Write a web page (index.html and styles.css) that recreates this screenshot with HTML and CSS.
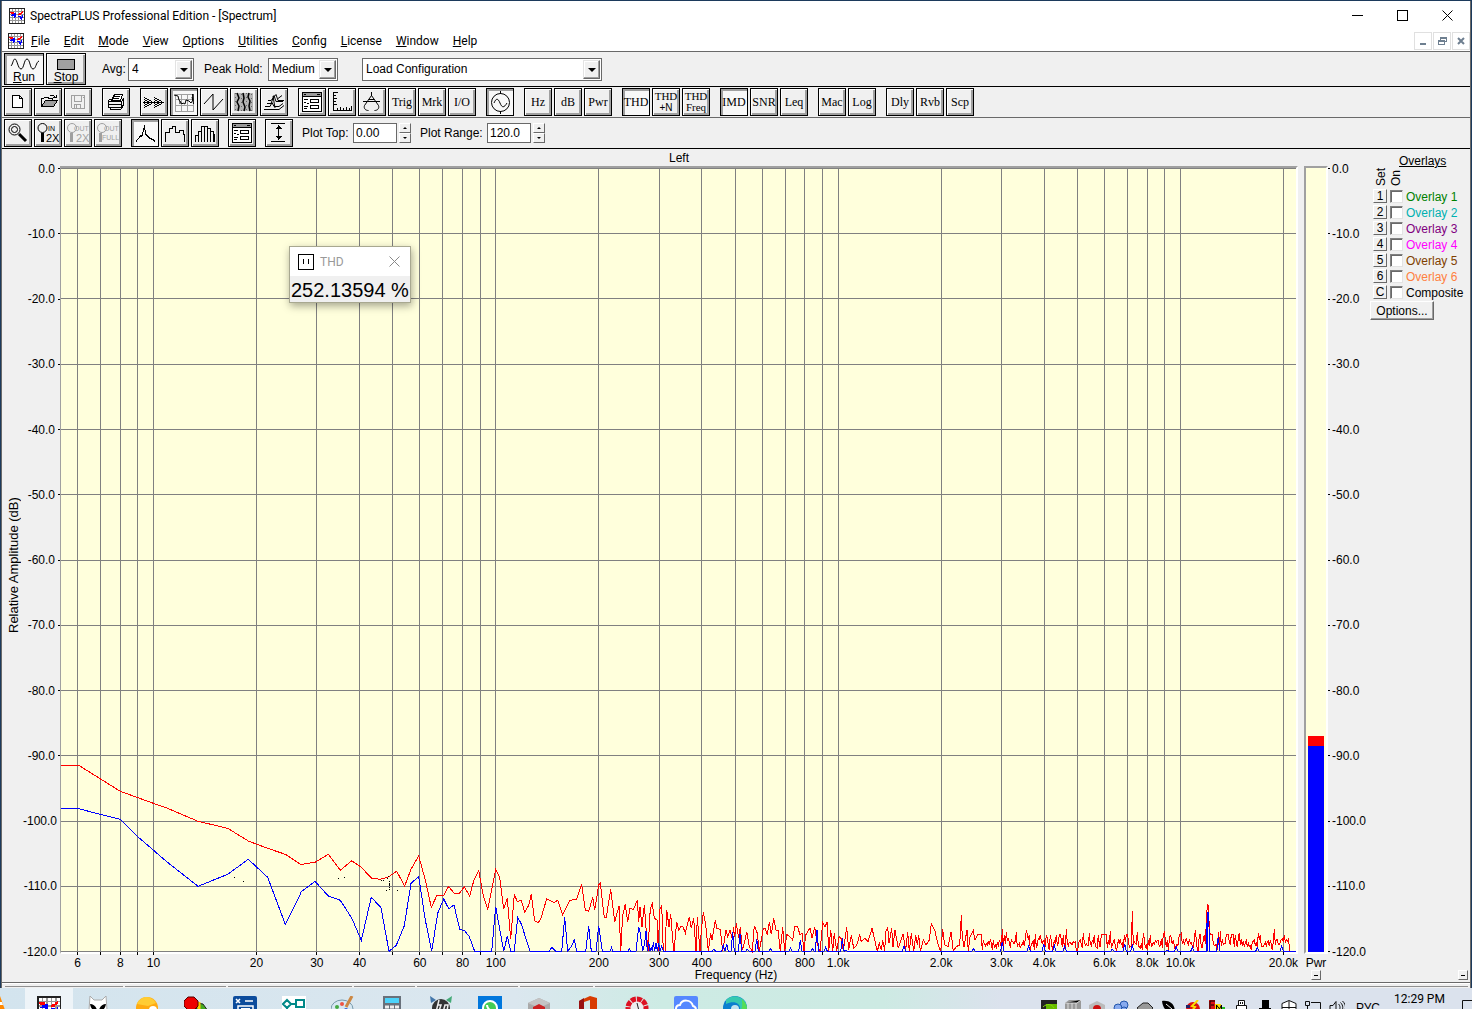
FILE: index.html
```html
<!DOCTYPE html>
<html lang="en">
<head>
<meta charset="utf-8">
<title>SpectraPLUS Professional Edition - [Spectrum]</title>
<link rel="stylesheet" href="styles.css">
</head>
<body>
<svg class="defs" aria-hidden="true">
  <symbol id="app" viewBox="0 0 16 16">
    <path fill="#fff" stroke="#222" d="M.5.5h15v15H.5z"/>
    <path stroke="#999" fill="none" d="M3.5 1v14M6.5 1v14M9.5 1v14M12.5 1v14M1 3.500h14M1 6.500h14M1 9.500h14M1 12.500h14"/>
    <path stroke="#f00" fill="none" d="M1 4.500h4M2 5.500h3M9 6.500h3M10 5.500h2M12.500 4v2M13.500 3v2"/>
    <path stroke="#00f" fill="none" d="M2 7.500h4M3 6.500h2M5.500 5v5M6.500 5v4M9 8.500h3M11.500 8v3M12.500 9v3M13.500 7v3"/>
  </symbol>
  <symbol id="dialog" viewBox="1 1 26 26">
    <path fill="#fff" stroke="#000" d="M4.500 4.500h19v19h-19z"/>
    <path stroke="#999" stroke-width="3" d="M5 6.500h18"/>
    <path stroke="#000" d="M5 8.500h18M6 6.500h2M19 6.500h3"/>
    <path fill="none" stroke="#000" d="M12.500 11.500h8v3h-8zM12.500 17.500h8v3h-8zM6 11.500h4M6 14.500h2M9 15.500h2M6 18.500h4M6 20.500h3"/>
  </symbol>
</svg>

<div class="window">
  <header class="titlebar">
    <svg class="app-icon"><use href="#app"/></svg>
    <h1>SpectraPLUS Professional Edition - [Spectrum]</h1>
    <div class="win-controls">
      <button aria-label="Minimize"><svg viewBox="0 0 11 11"><path d="M0 5.500h11"/></svg></button>
      <button aria-label="Maximize"><svg viewBox="0 0 11 11"><path d="M.5.5h10v10H.5z"/></svg></button>
      <button aria-label="Close"><svg class="smooth" viewBox="0 0 11 11"><path d="M.5.5l10 10M10.500.5l-10 10"/></svg></button>
    </div>
  </header>

  <nav class="menubar">
    <svg class="app-icon"><use href="#app"/></svg>
    <a href="#"><u>F</u>ile</a><a href="#"><u>E</u>dit</a><a href="#"><u>M</u>ode</a><a href="#"><u>V</u>iew</a><a href="#"><u>O</u>ptions</a><a href="#"><u>U</u>tilities</a><a href="#"><u>C</u>onfig</a><a href="#"><u>L</u>icense</a><a href="#"><u>W</u>indow</a><a href="#"><u>H</u>elp</a>
    <div class="mdi">
      <button aria-label="Minimize child"><svg viewBox="0 0 10 10"><path d="M2 8h6"/></svg></button>
      <button aria-label="Restore child"><svg viewBox="0 0 10 10"><path stroke-width="1" d="M3.500 3.500v-2h6v4h-2M1.500 4.500h6v4h-6zM2 5.500h5M4 2.500h5"/></svg></button>
      <button aria-label="Close child"><svg class="smooth" viewBox="0 0 10 10"><path d="M2 2l6 6M8 2l-6 6"/></svg></button>
    </div>
  </nav>

  <section class="bar bar-run">
    <button class="tool wide on"><svg viewBox="0 0 38 16"><path class="smooth" d="M6 11c2-2 2-7 4-7s3 10 6 10 3-10 6-10 3 10 6 10 3-7 6-8"/></svg><span><u>R</u>un</span></button>
    <button class="tool wide"><svg viewBox="0 0 38 16"><path fill="#a0a0a0" d="M10.500 4.500h17v10h-17z"/></svg><span><u>S</u>top</span></button>
    <label class="lab-avg" for="avg">Avg:</label>
    <span class="combo c-avg"><select id="avg"><option>4</option></select><i></i></span>
    <label class="lab-peak" for="peak">Peak Hold:</label>
    <span class="combo c-peak"><select id="peak"><option>Medium</option></select><i></i></span>
    <span class="combo c-load"><select aria-label="Configuration"><option>Load Configuration</option></select><i></i></span>
  </section>

  <section class="bar bar-tools">
    <div class="group">
      <button class="tool" aria-label="New"><svg viewBox="1 1 26 26"><path fill="#fff" d="M8.500 7.500h7l3 3v9h-10zM15.500 7.500v3h3"/></svg></button>
      <button class="tool" aria-label="Open"><svg viewBox="1 1 26 26"><path d="M7.500 18.500v-8h2l1-1h4v1h4v2M15.500 8.500l1-1h3l2 2M19 9.500h3.500v-3"/><path fill="#a0a0a0" d="M7.500 18.500l4-6h12l-4 6z"/></svg></button>
      <button class="tool off" aria-label="Save"><svg viewBox="1 1 26 26"><path d="M7.500 7.500h13v13h-12l-1-1zM10.500 8v5h7V8M10.500 20v-4h6v4M12.500 17v3M18.500 9.500h1"/></svg></button>
    </div>
    <div class="group"><button class="tool" aria-label="Print"><svg viewBox="1 1 26 26"><path fill="#fff" d="M9.500 12.500l3-6h8l-2 6z"/><path d="M12 8.500h6M11 10.500h6M6.500 12.500l3-2M6.500 13.500h13v6h-13zM19.500 13.500l2-3v6l-2 3M7 16.500h12M8.500 19.500v2h10l3-4"/></svg></button></div>
    <div class="group">
      <button class="tool" aria-label="Time series"><svg viewBox="1 1 26 26"><path d="M3 14.500h21"/><path stroke-dasharray="1 1" d="M4.500 9v11M5.500 10v9M6.500 10v9M7.500 11v7M8.500 11v7M9.500 12v5M10.500 12v5M11.500 13v3M14.500 9v11M15.500 10v9M16.500 10v9M17.500 11v7M18.500 11v7M19.500 12v5M20.500 12v5M21.500 13v3"/></svg></button>
      <button class="tool on" aria-label="Spectrum"><svg viewBox="1 1 26 26"><path stroke="#a0a0a0" d="M5.500 6.500h18v17h-18zM11.500 7v16M17.500 7v16M6 11.500h17M6 17.500h17"/><path class="smooth" d="M4 7l4 1 1 4 3 4 1-1 2 1 1-4 3 1 2 2 2-3V6M22.500 6l1 10M10 13v3M22 9l1 4"/></svg></button>
      <button class="tool" aria-label="Phase"><svg viewBox="1 1 26 26"><path class="smooth" d="M4 16l9-10v16l10-11"/></svg></button>
      <button class="tool" aria-label="Spectrogram"><svg viewBox="1 1 26 26"><path fill="#b4b4b4" stroke="none" d="M4 5h19v18H4z"/><path class="smooth" stroke-width="1.500" d="M7 5l2 5-2 4 2 4-1 5M13 5l1 5-1 4 2 5-1 4M19 5l-1 4 2 4-1 5 1 5"/><path stroke="#666" stroke-dasharray="1 3" d="M5.500 5v18M11.500 6v17M16.500 5v18M21.500 6v17"/></svg></button>
      <button class="tool" aria-label="3-D surface"><svg viewBox="1 1 26 26"><path class="smooth" d="M4 21.500h15l5-4M5 18.500h5l2-4 2 4h5l4-3M7 15.500h4l3-8 2 6h7M8 12.500h3l5-6 2 6h6M18 10.500l4-3M13 8l2 12"/></svg></button>
    </div>
    <div class="group">
      <button class="tool" aria-label="Settings"><svg><use href="#dialog"/></svg></button>
      <button class="tool" aria-label="Scaling"><svg viewBox="1 1 26 26"><path d="M5.500 4v18.500h18M6 4.500h4M6 7.500h2M6 10.500h3M6 13.500h2M6 16.500h3M9.500 22v-2M12.500 22v-3M15.500 22v-2M18.500 22v-3M21.500 22v-2M23.500 22v-4"/></svg></button>
      <button class="tool" aria-label="Calibration"><svg viewBox="1 1 26 26"><path class="smooth" d="M13.500 4v4M5 13.500h17M13.500 7.500l-7 10c-1 3 1 5 4 5M13.500 7.500l7 10c1 3-1 5-4 5M10.500 11.500h6"/></svg></button>
      <button class="tool">Trig</button><button class="tool">Mrk</button><button class="tool">I/O</button>
    </div>
    <div class="group"><button class="tool on" aria-label="Signal generator"><svg viewBox="1 1 26 26"><circle class="smooth" cx="14.500" cy="14.500" r="9"/><path d="M14.500 3v3M14.500 23v3"/><path class="smooth" d="M8 15c2-5 4-5 6 0s4 5 7 0"/></svg></button></div>
    <div class="group"><button class="tool">Hz</button><button class="tool">dB</button><button class="tool">Pwr</button></div>
    <div class="group"><button class="tool on">THD</button><button class="tool two">THD<br><span>+N</span></button><button class="tool two">THD<br>Freq</button></div>
    <div class="group"><button class="tool on">IMD</button><button class="tool">SNR</button><button class="tool">Leq</button></div>
    <div class="group"><button class="tool">Mac</button><button class="tool">Log</button></div>
    <div class="group"><button class="tool">Dly</button><button class="tool">Rvb</button><button class="tool">Scp</button></div>
  </section>

  <section class="bar bar-view">
    <div class="group">
      <button class="tool" aria-label="Zoom"><svg viewBox="1 1 26 26"><circle class="smooth" cx="10.500" cy="10.500" r="5.500"/><circle class="smooth" cx="10.500" cy="10.500" r="3"/><path class="smooth" stroke-width="3" d="M15 15l7 7"/></svg></button>
      <button class="tool" aria-label="Zoom in 2X"><svg viewBox="1 1 26 26"><circle class="smooth" cx="8.500" cy="9" r="4.500"/><path stroke-width="3" d="M8.500 14v9"/><text x="14" y="12">IN</text><text class="big" x="12" y="23">2X</text></svg></button>
      <button class="tool off" aria-label="Zoom out 2X"><svg viewBox="1 1 26 26"><circle class="smooth" cx="8" cy="9" r="4.500"/><path stroke-width="3" d="M7.500 14v9"/><text x="10" y="12">OUT</text><text class="big" x="12" y="23">2X</text></svg></button>
      <button class="tool off" aria-label="Zoom out full"><svg viewBox="1 1 26 26"><circle class="smooth" cx="8" cy="9" r="4.500"/><path stroke-width="3" d="M6.500 14v9"/><text x="10" y="12">OUT</text><text x="8" y="21">FULL</text></svg></button>
    </div>
    <div class="group">
      <button class="tool on" aria-label="Line plot"><svg viewBox="1 1 26 26"><path d="M5 22.500l5-6 1 1 2-8v-3l2 9 4 4 3 1 2 2"/></svg></button>
      <button class="tool" aria-label="Third octave"><svg viewBox="1 1 26 26"><path d="M4.500 23v-10h4v-4h3v-2h3v6h4v-2h4v4h1v8"/></svg></button>
      <button class="tool" aria-label="Bar plot"><svg viewBox="1 1 26 26"><path d="M4.500 23v-7h3v7M7.500 16v-4h3v11M10.500 12v-5h3v16M13.500 7h3v16M16.500 9.500h3v13.500M19.500 12.500h3v10.500M22.500 15.500h1v7.500"/></svg></button>
    </div>
    <div class="group"><button class="tool" aria-label="Display settings"><svg><use href="#dialog"/></svg></button></div>
    <div class="group"><button class="tool" aria-label="Autoscale"><svg viewBox="1 1 26 26"><path d="M6 4.500h14M6 22.500h14M13.500 6v15M11.500 8.500h4M12.500 7.500h2M10.500 9.500h6M11.500 18.500h4M12.500 19.500h2M10.500 17.500h6"/></svg></button></div>
    <label class="lab-top" for="top">Plot Top:</label><input class="num" id="top" value="0.00"><span class="spin"><button aria-label="Top up"></button><button class="dn" aria-label="Top down"></button></span>
    <label class="lab-range" for="range">Plot Range:</label><input class="num" id="range" value="120.0"><span class="spin"><button aria-label="Range up"></button><button class="dn" aria-label="Range down"></button></span>
  </section>

  <main class="view">
    <div class="ytitle">Relative Amplitude (dB)</div>
    <ul class="scale scale-left"></ul>
    <h2 class="channel">Left</h2>
    <div class="frame">
      <svg class="plot"><g id="grid"></g>
        <svg class="traces" viewBox="0 0 1235 784" preserveAspectRatio="none" width="100%" height="100%">
          <polyline id="peak-trace" class="red"/><polyline id="live-trace" class="blue"/><path id="dots" class="dots"/>
        </svg>
      </svg>
    </div>
    <svg class="xaxis" id="xaxis"></svg>
    <div class="meter"><div class="hold"></div><div class="level"></div></div>
    <ul class="scale scale-right"></ul>
    <div class="pwr">Pwr</div>
    <aside class="overlays">
      <h3>Overlays</h3>
      <div class="heads"><span>Set</span><span>On</span></div>
      <div class="ov"><button>1</button><input type="checkbox" id="o1"><label class="k1" for="o1">Overlay 1</label></div>
      <div class="ov"><button>2</button><input type="checkbox" id="o2"><label class="k2" for="o2">Overlay 2</label></div>
      <div class="ov"><button>3</button><input type="checkbox" id="o3"><label class="k3" for="o3">Overlay 3</label></div>
      <div class="ov"><button>4</button><input type="checkbox" id="o4"><label class="k4" for="o4">Overlay 4</label></div>
      <div class="ov"><button>5</button><input type="checkbox" id="o5"><label class="k5" for="o5">Overlay 5</label></div>
      <div class="ov"><button>6</button><input type="checkbox" id="o6"><label class="k6" for="o6">Overlay 6</label></div>
      <div class="ov"><button>C</button><input type="checkbox" id="o7"><label for="o7">Composite</label></div>
      <button class="options">Options...</button>
    </aside>
    <div class="xtitle">Frequency (Hz)</div>
    <button class="mini mini-pwr" aria-label="Hide power"></button>
    <button class="mini mini-ov" aria-label="Hide overlays"></button>

    <div class="thd" role="dialog" aria-label="THD">
      <div class="thd-title"><svg shape-rendering="crispEdges" viewBox="0 0 16 16"><path d="M.5.5h15v15H.5z" fill="#fff" stroke="#000"/><path stroke="#000" d="M5.500 5v5M10.500 5v5"/></svg><span>THD</span>
        <button aria-label="Close THD"><svg viewBox="0 0 11 11"><path stroke="#888" d="M.5.5l10 10M10.500.5l-10 10"/></svg></button></div>
      <output>252.13594 %</output>
    </div>
  </main>
  <footer class="status"><i class="s1"></i><i class="s2"></i><i class="s3"></i><i class="s4"></i><i class="s5"></i><i class="s6"></i><i class="s7"></i></footer>
</div>

<div class="taskbar">
  <svg class="cone" viewBox="0 0 5 24"><path fill="#f80" d="M0 0l5 14H0z"/><path fill="#fff" d="M0 6h2l1 3H0z"/></svg>
  <div class="tasks">
    <span class="task active"><svg viewBox="0 0 16 16" shape-rendering="crispEdges"><use href="#app"/></svg></span>
    <span class="task"><svg viewBox="0 0 24 24"><path fill="#fff" stroke="#aaa" d="M4 0l4 4h8l4-4 1 14-6 9H9l-6-9z"/><path d="M4 8c3 0 6 2 7 6-4 1-6-1-7-6zM20 8c-3 0-6 2-7 6 4 1 6-1 7-6z"/></svg></span>
    <span class="task"><svg viewBox="0 0 24 24"><circle cx="12" cy="12" r="11" fill="#fa1"/><path fill="#fc3" d="M2 8c4-9 14-9 19-1l-8 3z"/><circle cx="18" cy="14" r="4" fill="#fff"/></svg></span>
    <span class="task"><svg viewBox="0 0 24 24"><path fill="#4a2" stroke="#222" d="M13 7l6 1 5 7v5H12z"/><path stroke="#fc0" stroke-width="3" d="M15 6v12"/><path fill="#e00" stroke="#500" d="M4 1h6l4 4v5l-4 4H4L0 10V5z"/></svg></span>
    <span class="task"><svg viewBox="0 0 24 24"><rect width="24" height="24" rx="2" fill="#0c4c9c"/><path fill="none" stroke="#fff" stroke-width="1.500" d="M3 3l4 4M7 3L3 7M12 5h8M5 24V10h15v14"/><path fill="#fff" d="M8 12h9v8H8z"/></svg></span>
    <span class="task"><svg viewBox="0 0 24 24"><path fill="#fff" d="M0 0h24v24H0z"/><path fill="none" stroke="#088" stroke-width="2" d="M1 8l4-4 4 4-4 4zM9 8h5M14 4h8v7h-8zM5 12v7h10"/></svg></span>
    <span class="task"><svg viewBox="0 0 24 24"><ellipse cx="11" cy="13" rx="11" ry="9" fill="#d6e8f2" stroke="#79a"/><circle cx="6" cy="11" r="2" fill="#4a4"/><circle cx="11" cy="8" r="2" fill="#e54"/><circle cx="15" cy="14" r="2" fill="#36d"/><path stroke="#c84" stroke-width="3" d="M21 0l-6 11"/></svg></span>
    <span class="task"><svg viewBox="0 0 24 24"><path fill="#69717b" d="M3 0h18v24H3z"/><path fill="#4dd3fa" d="M5 2h14v5H5z"/><path stroke="#eee" stroke-width="3" stroke-dasharray="4 1" d="M5 11h14M5 16h14"/></svg></span>
    <span class="task"><svg viewBox="0 0 24 24"><path fill="#47a" d="M1 0l6 4-5 3z"/><path fill="#4a7" d="M23 0l-6 4 5 3z"/><circle cx="12" cy="12" r="9" fill="#333"/><path stroke="#eee" stroke-width="1.500" fill="none" d="M10 4L7 16M9 9h3l-2 6M13 20l3-11h3l-1 6h-3"/></svg></span>
    <span class="task"><svg viewBox="0 0 24 24"><path fill="#07d" d="M0 0h24v24H0z"/><circle cx="12" cy="12" r="7" fill="#4c5" stroke="#fff" stroke-width="2"/><path stroke="#fff" stroke-width="2" fill="none" d="M9 9c0 3 3 6 6 6"/></svg></span>
    <span class="task"><svg viewBox="0 0 24 24"><path fill="#aaa" d="M12 2l11 5v12l-11 5-11-5V7z"/><path fill="#c4c4c4" d="M12 2l11 5-11 5L1 7z"/><path fill="#c22" d="M12 8l6 3v6l-6 3-6-3v-6z"/></svg></span>
    <span class="task"><svg viewBox="0 0 24 24"><path fill="#d83b01" d="M3 5l11-5 7 2v20l-7 2-11-5 11 1V4L8 6v10l-5 2z"/><path fill="#911" d="M3 5l5-3v14l-5 2z"/></svg></span>
    <span class="task"><svg viewBox="0 0 24 24"><circle cx="12" cy="12" r="9" fill="#eee" stroke="#d12" stroke-width="5" stroke-dasharray="5 1"/><path stroke="#222" d="M12 7l2 8"/></svg></span>
    <span class="task"><svg viewBox="0 0 24 24"><rect width="24" height="24" rx="2" fill="#58f"/><path fill="none" stroke="#fff" stroke-width="2" d="M6 18c-6-1-5-9 0-9 2-6 11-6 13 1 4 1 4 7 0 8z"/></svg></span>
    <span class="task"><svg viewBox="0 0 24 24"><circle cx="12" cy="12" r="12" fill="#0a7fcf"/><path fill="#35c9b0" d="M3 4c8-8 21-2 21 8l-7 2c1-7-6-10-14-6z"/><path fill="#5d5" d="M19 3c3 3 5 6 5 10l-6 1c2-4 1-7 1-11z"/><circle cx="12" cy="13" r="4" fill="#bfe4f0"/></svg></span>
  </div>
  <div class="tray">
    <svg viewBox="0 0 16 16"><path fill="#222" d="M0 0h16v16H0z"/><path fill="#6b0" d="M5 4h11v12H5z"/><path fill="none" stroke="#8d0" d="M2 7c4-4 9-3 11 1"/></svg>
    <svg viewBox="0 0 16 16"><path fill="#999" d="M0 3l4-3h12v14l-4 2H0z"/><path stroke="#ddd" d="M3 3v12M7 3v12M11 3v12M0 3h12l4-3"/></svg>
    <svg viewBox="0 0 16 16"><path fill="#bbb" d="M8 1l8 4v8l-8 3-8-3V5z"/><circle cx="8" cy="9" r="4" fill="#c11"/></svg>
    <svg viewBox="0 0 16 16"><g fill="#8ae" stroke="#25a"><circle cx="11" cy="5" r="4"/><circle cx="5" cy="8" r="4"/><circle cx="11" cy="10" r="3"/></g></svg>
    <svg viewBox="0 0 16 16"><path fill="#999" stroke="#222" d="M0 8l6-5h5l5 5-3 4H3z"/></svg>
    <svg viewBox="0 0 16 16"><path d="M1 1c9-1 13 4 13 12-8 0-12-4-13-12z"/><path stroke="#eee" d="M5 4l6 5"/></svg>
    <svg viewBox="0 0 16 16"><circle cx="8" cy="9" r="7" fill="#d11"/><path stroke="#fd0" stroke-width="2" d="M13 0L7 6l3 1-6 7"/><path d="M1 5h4v3H1z" fill="#226"/></svg>
    <svg viewBox="0 0 16 16"><path fill="#d11" d="M0 0h6v16H0z"/><path fill="#fd0" d="M6 4h6v12H6z"/><path fill="#2b2" d="M12 7h4v9h-4z"/><path stroke="#000" fill="none" d="M6 1H1v9h4M2 5h3M7.500 12V5l3 4 2-4v8"/></svg>
    <svg viewBox="0 0 16 16"><path fill="#fff" stroke="#111" d="M5.500.5h6v5h-6zM3.500 5.500h10v9l-2 1h-6l-2-1z"/><path stroke="#111" d="M7.500 2v2M9.500 2v2"/></svg>
    <svg viewBox="0 0 16 16"><path d="M5 0h7v9H5zM2 8h12v3H2z"/></svg>
    <svg viewBox="0 0 16 16"><path fill="#fff" stroke="#111" d="M8 .5l7 3v7l-7 5-7-5v-7zM8 1v14M1 7.500h14"/></svg>
    <svg viewBox="0 0 16 16"><path fill="none" stroke="#111" d="M.5 1.500h4v4h-4zM2.500 6v7M6 2.500h9.500v9H5"/></svg>
    <svg viewBox="0 0 16 16"><path fill="none" stroke="#111" d="M1 5.500h3l3-4v12l-3-4H1zM9.500 4c2 2 2 5 0 7M11.500 2.500c3 3 3 7 0 10M13.500 1c4 4 4 9 0 13"/></svg>
    <span class="lang">РУС</span>
    <time>12:29 PM</time>
    <svg class="note" viewBox="0 0 10 16"><path fill="none" stroke="#111" d="M10 .5H.5v12H10"/></svg>
  </div>
</div>
<script src="plot.js"></script>
</body>
</html>
```
FILE: styles.css
```css
* { box-sizing: border-box; }
body {
  margin: 0;
  min-height: 100vh;
  display: flex;
  flex-direction: column;
  background: #1c3a5c;
  font: 12px/14px "Liberation Sans", Arial, sans-serif;
  color: #000;
  overflow: hidden;
}
button, input, select { font: inherit; color: inherit; margin: 0; padding: 0; border-radius: 0; }
h1, h2, h3, ul { margin: 0; padding: 0; font: inherit; list-style: none; }
.defs { display: none; }
.window {
  flex: 1;
  display: flex;
  flex-direction: column;
  margin: 1px 1px 0 1px;
  background: #f0f0f0;
  border-left: 1px solid #696969;
  border-right: 1px solid #696969;
}

/* Title and menu */
.titlebar { display: flex; align-items: center; height: 29px; padding-left: 7px; background: #fff; }
.titlebar h1, .menubar a { font: 12px/16px Roboto, "Noto Sans", sans-serif; }
.titlebar h1 { margin-left: 5px; }
.app-icon { width: 16px; height: 16px; shape-rendering: crispEdges; }
.win-controls { display: flex; margin-left: auto; }
.win-controls button { width: 45px; height: 28px; border: 0; background: none; }
.win-controls svg { width: 11px; height: 11px; display: block; margin: auto; fill: none; stroke: #000; shape-rendering: crispEdges; }
.win-controls .smooth, .mdi .smooth { shape-rendering: auto; }
.menubar { display: flex; align-items: center; height: 21px; padding-left: 6px; background: #fff; }
.menubar a { margin-left: 14px; color: #000; text-decoration: none; }
.menubar .app-icon + a { margin-left: 7px; }
.mdi { display: flex; gap: 1px; margin-left: auto; }
.mdi button { width: 18px; height: 18px; border: 1px solid #e0e0e0; background: #fff; }
.mdi svg { display: block; width: 10px; height: 10px; margin: auto; fill: none; stroke: #6e7f90; stroke-width: 2; shape-rendering: crispEdges; }

/* Toolbars */
.bar { display: flex; align-items: center; padding-left: 2px; }
.bar-run { height: 36px; border-top: 1px solid #696969; border-bottom: 1px solid #000; }
.bar-tools { height: 31px; gap: 10px; border-bottom: 1px solid #696969; }
.bar-view { height: 31px; gap: 9px; border-bottom: 1px solid #000; }
.group { display: flex; gap: 2px; }
.tool {
  width: 28px;
  height: 28px;
  border: 1px solid #000;
  background: #f0f0f0;
  box-shadow: inset 1px 1px #fff, inset -2px -2px #a0a0a0;
  font: 12px/12px "Liberation Serif", "Times New Roman", serif;
  display: flex;
  align-items: center;
  justify-content: center;
  white-space: nowrap;
}
.tool.on { background: #f8f8f8; box-shadow: inset 2px 2px #a0a0a0; }
.tool svg { width: 26px; height: 26px; flex: none; fill: none; stroke: #000; shape-rendering: crispEdges; }
.tool .smooth { shape-rendering: auto; }
.tool.off svg { stroke: #a0a0a0; }
.tool text { font: 7px "Liberation Sans", Arial, sans-serif; fill: #000; stroke: none; }
.tool text.big { font-size: 11px; }
.tool.off text { fill: #a0a0a0; }
.tool.two { display: block; text-align: center; font-size: 11px; line-height: 11px; }
.tool.two span { font: 10px/10px "Liberation Sans", Arial, sans-serif; }
.tool.wide { display: block; width: 40px; height: 32px; font: 12px/13px "Liberation Sans", Arial, sans-serif; }
.tool.wide + .wide { margin-left: 2px; }
.tool.wide svg { display: block; width: 38px; height: 16px; }
.tool.wide span { display: block; text-align: center; }
.lab-avg { margin-left: 16px; width: 26px; }
.lab-peak { margin-left: 10px; width: 64px; }
.combo { position: relative; height: 23px; }
.combo select {
  width: 100%; height: 23px; padding-left: 3px;
  appearance: none; background: #fff; border: 1px solid #696969;
}
.combo i {
  position: absolute; top: 2px; right: 2px; width: 17px; height: 19px;
  background: #f0f0f0; border: 1px solid; border-color: #e3e3e3 #696969 #696969 #e3e3e3;
  box-shadow: inset -1px -1px #a0a0a0, inset 1px 1px #fff; pointer-events: none;
}
.combo i::after {
  content: ""; position: absolute; left: 4px; top: 7px;
  border: 4px solid transparent; border-top-color: #000; border-bottom: 0;
}
.c-avg { width: 66px; }
.c-peak { width: 70px; }
.c-load { width: 240px; margin-left: 24px; }
.lab-top { width: 51px; margin-right: -9px; }
.lab-range { width: 67px; margin-right: -9px; }
.num { width: 44px; height: 20px; padding-left: 2px; background: #fff; border: 1px solid #696969; margin-right: -7px; }
.spin { display: flex; flex-direction: column; width: 12px; }
.spin button {
  width: 12px; height: 10px; background: #f0f0f0; border: 1px solid; border-color: #fff #696969 #696969 #fff;
  display: flex; align-items: center; justify-content: center;
}
.spin button::after { content: ""; border: 2px solid transparent; border-bottom-color: #000; border-top: 0; }
.spin .dn::after { border: 2px solid transparent; border-top-color: #000; border-bottom: 0; }

/* Plot area */
.view {
  flex: 1;
  position: relative;
  display: grid;
  grid-template-columns: 24px 34px minmax(0, 1fr) 6px 24px 42px 100px;
  grid-template-rows: 17px minmax(300px, 1fr) 14px 14px;
}
.channel { grid-area: 1 / 3; text-align: center; line-height: 18px; }
.ytitle {
  grid-area: 1 / 1 / 5; writing-mode: vertical-rl; transform: rotate(180deg);
  text-align: center; font-size: 13px; line-height: 24px;
}
.frame { grid-area: 2 / 3; border: solid; border-width: 2px 2px 2px 1px; border-color: #a0a0a0 #fff #fff #a0a0a0; background: #ffffdc; }
.plot { display: block; width: 100%; height: 100%; overflow: visible; shape-rendering: crispEdges; }
.traces { overflow: visible; }
.plot line { stroke: #808080; }
.plot line.tick { stroke: #000; }
.plot polyline { fill: none; vector-effect: non-scaling-stroke; }
.red { stroke: #f00; }
.blue { stroke: #00f; }
.dots { fill: #000; }
.scale { display: flex; flex-direction: column; justify-content: space-between; margin: -5px 0 -4px; }
.scale li { display: flex; align-items: center; height: 14px; padding-top: 1px; }
.scale-left { grid-area: 2 / 2; }
.scale-left li { justify-content: flex-end; gap: 3px; }
.scale-left li::after, .scale-right li::before { content: ""; width: 2px; height: 1px; background: #000; }
.scale-right { grid-area: 2 / 6; }
.scale-right li { gap: 2px; }
.xaxis { grid-area: 3 / 3; width: calc(100% - 3px); height: 14px; margin-left: 1px; overflow: visible; }
.xaxis text { text-anchor: middle; }
.xtitle { grid-area: 4 / 1 / 5 / 8; text-align: center; }
.meter {
  grid-area: 2 / 5; display: flex; flex-direction: column; justify-content: flex-end;
  border: 2px solid; border-color: #a0a0a0 #fff #fff #a0a0a0; background: #ffffdc; padding: 0 2px;
}
.hold { height: 10px; background: #f00; }
.level { height: 26.300%; background: #00f; }
.pwr { grid-area: 3 / 5; text-align: center; line-height: 18px; }
.mini { width: 10px; height: 10px; background: #f0f0f0; border: 1px solid; border-color: #fff #696969 #696969 #fff; align-self: center; justify-self: center; display: flex; align-items: center; justify-content: center; }
.mini::after { content: ""; width: 4px; height: 1px; background: #000; }
.mini-pwr { grid-area: 4 / 5; }
.mini-ov { grid-area: 4 / 7; justify-self: end; margin-right: 2px; }

.overlays { grid-area: 1 / 7 / 4; padding-top: 5px; }
.overlays h3 { margin-left: 29px; text-decoration: underline; }
.heads { display: flex; align-items: flex-end; height: 20px; padding-bottom: 2px; margin-left: 4px; gap: 1px; }
.heads span { writing-mode: vertical-rl; transform: rotate(180deg); line-height: 14px; }
.ov { display: flex; align-items: center; height: 16px; padding-left: 3px; white-space: nowrap; }
.ov button, .options { background: #f0f0f0; border: 1px solid; border-color: #fff #696969 #696969 #fff; }
.ov button { width: 14px; height: 14px; line-height: 12px; }
.ov input { appearance: none; width: 13px; height: 13px; margin: 0 3px; background: #fff; border: 1px solid; border-color: #808080 #e3e3e3 #e3e3e3 #808080; box-shadow: inset 1px 1px #696969; }
.ov label { line-height: 16px; padding-top: 1px; }
.options { width: 64px; height: 19px; margin-top: 1px; box-shadow: inset -1px -1px #a0a0a0; }
.k1 { color: #008000; } .k2 { color: #00b0b0; } .k3 { color: #800080; }
.k4 { color: #f0f; } .k5 { color: #804000; } .k6 { color: #ff8040; }

/* Floating THD readout */
.thd { position: absolute; left: 287px; top: 97px; width: 122px; border: 1px solid #a8a890; background: #f0f0f0; box-shadow: 1px 3px 8px rgba(0, 0, 0, .35); }
.thd-title { display: flex; align-items: center; height: 29px; padding: 0 10px 0 8px; background: #fff; color: #999; }
.thd-title span { margin-left: 6px; font-family: Roboto, sans-serif; }
.thd-title svg { width: 16px; height: 16px; }
.thd-title button { margin-left: auto; border: 0; background: none; width: 11px; height: 11px; }
.thd-title button svg { display: block; width: 11px; height: 11px; }
.thd output { display: block; height: 26px; padding-left: 1px; font-size: 20px; line-height: 28px; white-space: nowrap; }

.status { display: flex; gap: 2px; height: 6px; padding: 3px 2px 0 3px; border-top: 1px solid #696969; box-shadow: inset 0 1px #fff; }
.status i { border-top: 1px solid #909090; }
.s1 { width: 118px; } .s2 { width: 101px; } .s3 { width: 124px; } .s4 { width: 61px; }
.s5 { width: 101px; } .s6 { width: 73px; } .s7 { flex: 1; }

/* Taskbar */
.taskbar {
  display: flex; height: 21px; overflow: hidden;
  background: linear-gradient(90deg, #d3e4ee, #dbe7ef 35%, #cdebe4 45%, #cdeae3 60%, #dbe2ed 68%, #dbe2ed);
}
.taskbar svg { flex: none; }
.cone { width: 5px; height: 24px; margin-top: 8px; }
.tasks { display: flex; gap: 1px; margin-left: 20px; }
.task { width: 48px; height: 40px; padding: 8px 12px; }
.task.active { background: #eef4f8; }
.task svg { display: block; width: 24px; height: 24px; }
.tray { display: flex; gap: 8px; margin-left: auto; padding-top: 12px; }
.tray svg { width: 16px; height: 16px; }
.lang { margin-left: 3px; width: 30px; line-height: 16px; }
.tray time { width: 48px; margin-top: -9px; font: 12px/16px Roboto, sans-serif; white-space: nowrap; }
.tray .note { width: 10px; margin-left: 12px; }
```
FILE: plot.js
```js
// Plot area in its own units: 1235 x 784, x is log frequency, y is 0 to -120 dB.
const W = 1235, H = 784, DECADE = 342.3, X10 = 92.5;
const NS = "http://www.w3.org/2000/svg";
const xOf = f => X10 + (Math.log10(f) - 1) * DECADE;
const pct = (v, whole) => (v / whole * 100) + "%";

function add(parent, tag, attrs, text) {
  const el = document.createElementNS(NS, tag);
  for (const k in attrs) el.setAttribute(k, attrs[k]);
  if (text) el.textContent = text;
  parent.appendChild(el);
}

const grid = document.getElementById("grid");
const axis = document.getElementById("xaxis");
const labels = { 6: "6", 8: "8", 10: "10", 20: "20", 30: "30", 40: "40", 60: "60", 80: "80", 100: "100",
  200: "200", 300: "300", 400: "400", 600: "600", 800: "800", 1000: "1.0k", 2000: "2.0k", 3000: "3.0k",
  4000: "4.0k", 6000: "6.0k", 8000: "8.0k", 10000: "10.0k", 20000: "20.0k" };
for (let d = 1; d <= 10000; d *= 10) {
  for (let m = 1; m < 10; m++) {
    const f = d * m;
    if (f < 6 || f > 20000) continue;
    const x = pct(xOf(f), W);
    add(grid, "line", { x1: x, x2: x, y1: 0, y2: "100%" });
    add(grid, "line", { class: "tick", x1: x, x2: x, y1: "100%", y2: "100.4%" });
    if (labels[f]) add(axis, "text", { x, y: 13 }, labels[f]);
  }
}
for (let i = 0; i <= 12; i++) {
  const y = pct(0.5 + i * 65.25, H);
  add(grid, "line", { x1: 0, x2: "100%", y1: y, y2: y });
  for (const ul of document.querySelectorAll(".scale")) {
    const li = document.createElement("li");
    li.textContent = (i ? "-" : "") + (i * 10) + ".0";
    ul.appendChild(li);
  }
}

// Each run of samples holds x,y pairs in thirds of a unit from the run's origin.
const run = (ox, oy, s) => s.trim().split(/\s+/).map(p => {
  const [x, y] = p.split(",").map(Number);
  return [ox + x / 3, oy + y / 3];
});
const LOW = [-61, 572], MID = [239, 672], HIGH = [579, 672], TOP = [939, 672];

const peak = [
  ...run(...LOW, "183,76 236,76 305,119 361,154 460,190 500,204 594,244 683,265 745,303 800,324 856,343 885,362"),
  ...run(...MID, `0,72 12,72 45,67 85,43 121,91 155,62 183,81 214,114 240,118 265,111 290,94 314,138 333,88 356,48 376,120 394,202
    411,166 431,166 446,139 462,160 478,160 493,140 509,169 522,119 536,91 550,168 563,208 575,150 587,88 599,112 611,208 622,175
    632,298 643,163 652,185 664,181 674,217 686,196 694,163 704,243 714,248 722,238 740,176 762,188 773,181 788,224 810,181 830,178
    845,133 856,210 866,214 878,172 884,211 896,135 901,129 913,233 919,232 932,148 944,245 957,198 962,334 968,225 976,193 983,247
    990,204 1000,209 1012,181 1016,245`),
  ...run(...HIGH, `0,200 6,262 13,195 20,290 24,334 31,205 37,192 43,235 52,240 55,334 59,210 65,195 70,334 75,334 80,210 87,260 92,222
    98,300 102,334 110,245 116,270 124,258 130,262 136,280 148,230 154,265 161,235 168,334 172,230 180,334 184,270 190,216 197,255 205,334
    212,280 216,300 226,240 230,265 241,268 248,334 258,270 263,290 270,270 278,300 280,260 284,290 289,250 296,295 301,260 307,330 313,310
    320,275 328,320 337,334 343,257 352,280 358,334 362,310 370,265 376,265 382,285 388,245 394,283 401,235 408,270 414,270 421,334 428,262
    434,334 440,283 450,290 458,300 464,260 473,260 480,285 486,280 492,334 497,285 510,263 516,295 524,262 531,310 540,334 548,248 555,260
    562,245 566,334 572,270 578,334 583,280 590,334 597,290 605,298 610,334 620,262 626,330 634,285 641,325 650,315 659,285 664,305 675,295
    684,305 696,265 702,290 712,334 718,310 724,330 728,300 734,334 737,275 743,262 747,310 755,265 759,320 765,270 775,325 789,283 797,330
    803,275 808,334 814,280 821,334 827,285 832,315 836,285 841,334 850,300 858,315 868,300 874,252 884,270 893,310 902,334 908,268 914,315
    924,320 933,275 940,334 948,320 959,315 964,226 967,290 972,320 981,270 985,334 990,290 1000,272 1005,300 1012,285`)
];

// Dense noise floor above 2.6 kHz, with the strong lines at their places.
let seed = 7;
const rnd = () => (seed = (seed * 16807) % 2147483647) / 2147483647;
const lines = { 7: 268, 20: 277, 50: 277, 80: 270, 105: 283, 199: 267, 250: 280, 268: 280, 332: 273, 397: 213, 413: 275, 430: 280,
  492: 278, 543: 280, 587: 270, 620: 250, 623: 193, 626: 198, 629: 262, 655: 277, 661: 274, 718: 278, 775: 280, 824: 268 };
for (let x = -56; x <= 866; x += 3) {
  const hit = Object.keys(lines).find(k => Math.abs(k - x) < 1.6);
  const r = rnd();
  const y = hit ? lines[hit] : r > .92 ? 331 : r < .14 ? 284 : 295 + rnd() * 30;
  peak.push([TOP[0] + x / 3, TOP[1] + y / 3]);
}
peak.push([TOP[0] + 290, TOP[1] + 111]);

const live = [
  ...run(...LOW, "183,205 236,206 300,223 361,238 418,294 500,365 594,439 683,403 745,358 803,412 856,553 900,465"),
  ...run(...MID, `0,160 5,154 45,124 85,168 121,181 155,234 184,301 214,172 243,203 267,334 289,316 313,257 333,130 356,110 376,240 395,334
    413,220 431,177 446,206 462,195 479,268 494,272 508,290 524,334 575,334 587,200 611,334 622,288 632,334 643,334 653,232 664,252 690,334
    748,334 755,322 768,334 785,334 794,232 803,334 813,320 823,300 830,334 857,334 866,258 874,334 888,334 896,258 907,334 930,334 935,322
    938,334 985,334 988,325 992,334 1008,334 1016,262`),
  ...run(...HIGH, "0,275 8,334 14,310 18,272 22,334 26,305 30,334 34,320 37,334 40,307 44,334 48,308 52,334 56,308 60,334 65,318 70,334")
];
const spikes = (origin, s) => {
  for (const p of s.split(" ")) {
    const [x, y] = p.split(",").map(Number);
    live.push(...run(...origin, `${x - 5},334 ${x},${y} ${x + 5},334`));
  }
};
spikes(HIGH, "222,327 250,315 260,312 278,275 300,282 322,328 350,297 392,325 452,324 481,300 518,325 531,270 557,322 607,295 618,330 792,318 1000,325");
spikes(TOP, "7,305 86,318 131,312 163,316 194,318 337,328 374,312 397,315 502,331 529,320 577,322");
live.push(...run(...TOP, "619,334 622,215 623,334 624,215 626,225 627,262 628,334"));
spikes(TOP, "655,290 772,323 845,318");
live.push([W, TOP[1] + 334 / 3]);

const draw = (id, pts) => document.getElementById(id).setAttribute("points", pts.map(p => p.map(v => v.toFixed(1)).join(",")).join(" "));
draw("peak-trace", peak);
draw("live-trace", live);

const specks = [...run(...LOW, "703,412 730,424"),
  ...run(...MID, "115,115 133,112 242,121 250,121 262,115 265,108 268,122 268,128 268,132 268,136 268,140 268,146 259,151 292,151")];
document.getElementById("dots").setAttribute("d", specks.map(([x, y]) => `M${Math.round(x)} ${Math.round(y)}h1v1h-1z`).join(""));
```
